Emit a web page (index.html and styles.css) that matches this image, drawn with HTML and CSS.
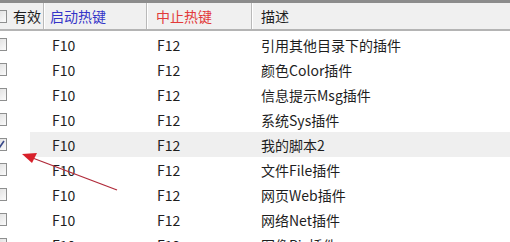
FILE: index.html
```html
<!DOCTYPE html>
<html>
<head>
<meta charset="utf-8">
<link rel="stylesheet" href="styles.css">
</head>
<body>
<div class="list">
  <div class="head">
    <div class="c1"><span class="cb"></span><span class="htext">有效</span></div>
    <div class="c2 blue">启动热键</div>
    <div class="c3 red">中止热键</div>
    <div class="c4">描述</div>
  </div>
  <div class="row"><div class="c1"><span class="cb"></span></div><div class="c2">F10</div><div class="c3">F12</div><div class="c4">引用其他目录下的插件</div></div>
  <div class="row"><div class="c1"><span class="cb"></span></div><div class="c2">F10</div><div class="c3">F12</div><div class="c4">颜色Color插件</div></div>
  <div class="row"><div class="c1"><span class="cb"></span></div><div class="c2">F10</div><div class="c3">F12</div><div class="c4">信息提示Msg插件</div></div>
  <div class="row"><div class="c1"><span class="cb"></span></div><div class="c2">F10</div><div class="c3">F12</div><div class="c4">系统Sys插件</div></div>
  <div class="row sel"><div class="c1"><span class="cb on"><svg width="13" height="13" viewBox="0 0 13 13"><path d="M3 6.5 L5.5 9.5 L10 3" fill="none" stroke="#3a4a8a" stroke-width="1.6"/></svg></span></div><div class="c2">F10</div><div class="c3">F12</div><div class="c4">我的脚本2</div></div>
  <div class="row"><div class="c1"><span class="cb"></span></div><div class="c2">F10</div><div class="c3">F12</div><div class="c4">文件File插件</div></div>
  <div class="row"><div class="c1"><span class="cb"></span></div><div class="c2">F10</div><div class="c3">F12</div><div class="c4">网页Web插件</div></div>
  <div class="row"><div class="c1"><span class="cb"></span></div><div class="c2">F10</div><div class="c3">F12</div><div class="c4">网络Net插件</div></div>
  <div class="row"><div class="c1"><span class="cb"></span></div><div class="c2">F10</div><div class="c3">F12</div><div class="c4">图像Pic插件</div></div>
</div>
<svg class="arrow" width="510" height="242" viewBox="0 0 510 242">
  <line x1="117" y1="190" x2="30" y2="157" stroke="#b02a3a" stroke-width="1.3"/>
  <polygon points="22,154 37,153 32,163" fill="#d8202a"/>
</svg>
</body>
</html>
```
FILE: styles.css
```css
html, body {
  margin: 0;
  padding: 0;
  background: #ffffff;
  overflow: hidden;
  width: 510px;
  height: 242px;
}
body {
  position: relative;
  font-family: "Noto Sans CJK SC", "Noto Sans", sans-serif;
  font-size: 14px;
  color: #1e1e1e;
}
.list {
  margin-left: -6px;
  width: 530px;
}
.head {
  display: flex;
  height: 26px;
  background: #f0f0f0;
  border-top: 3px solid #8c8c8c;
  border-bottom: 2px solid #b4b4b4;
  margin-bottom: 1px;
}
.head > div {
  display: flex;
  align-items: center;
  border-right: 1px solid #b9b9b9;
  box-shadow: 1px 0 0 #ffffff;
}
.head .c1 { gap: 6px; }
.c1 { width: 50px; display: flex; align-items: center; padding-left: 0; box-sizing: border-box; }
.c2 { width: 103px; padding-left: 6px; box-sizing: border-box; }
.c3 { width: 105px; padding-left: 9px; box-sizing: border-box; }
.c4 { flex: 1; padding-left: 9px; box-sizing: border-box; }
.row .c2 { padding-left: 8px; }
.row .c3 { padding-left: 10px; }
.blue { color: #3535c8; }
.red { color: #e23a3a; }
.htext { color: #1e1e1e; }
.row {
  display: flex;
  height: 25px;
  align-items: center;
}
.row > div { display: flex; align-items: center; height: 25px; }
.sel { background: linear-gradient(to right, #ffffff 0, #ffffff 36px, #efefef 36px); }
.cb {
  width: 11px;
  height: 11px;
  border: 1px solid #8e8f8f;
  background: linear-gradient(135deg, #dcdcdc, #fbfbfb);
  display: inline-block;
  position: relative;
  flex: none;
}
.cb svg { position: absolute; left: -1px; top: -1px; }
.arrow {
  position: absolute;
  left: 0;
  top: 0;
  pointer-events: none;
}
```
